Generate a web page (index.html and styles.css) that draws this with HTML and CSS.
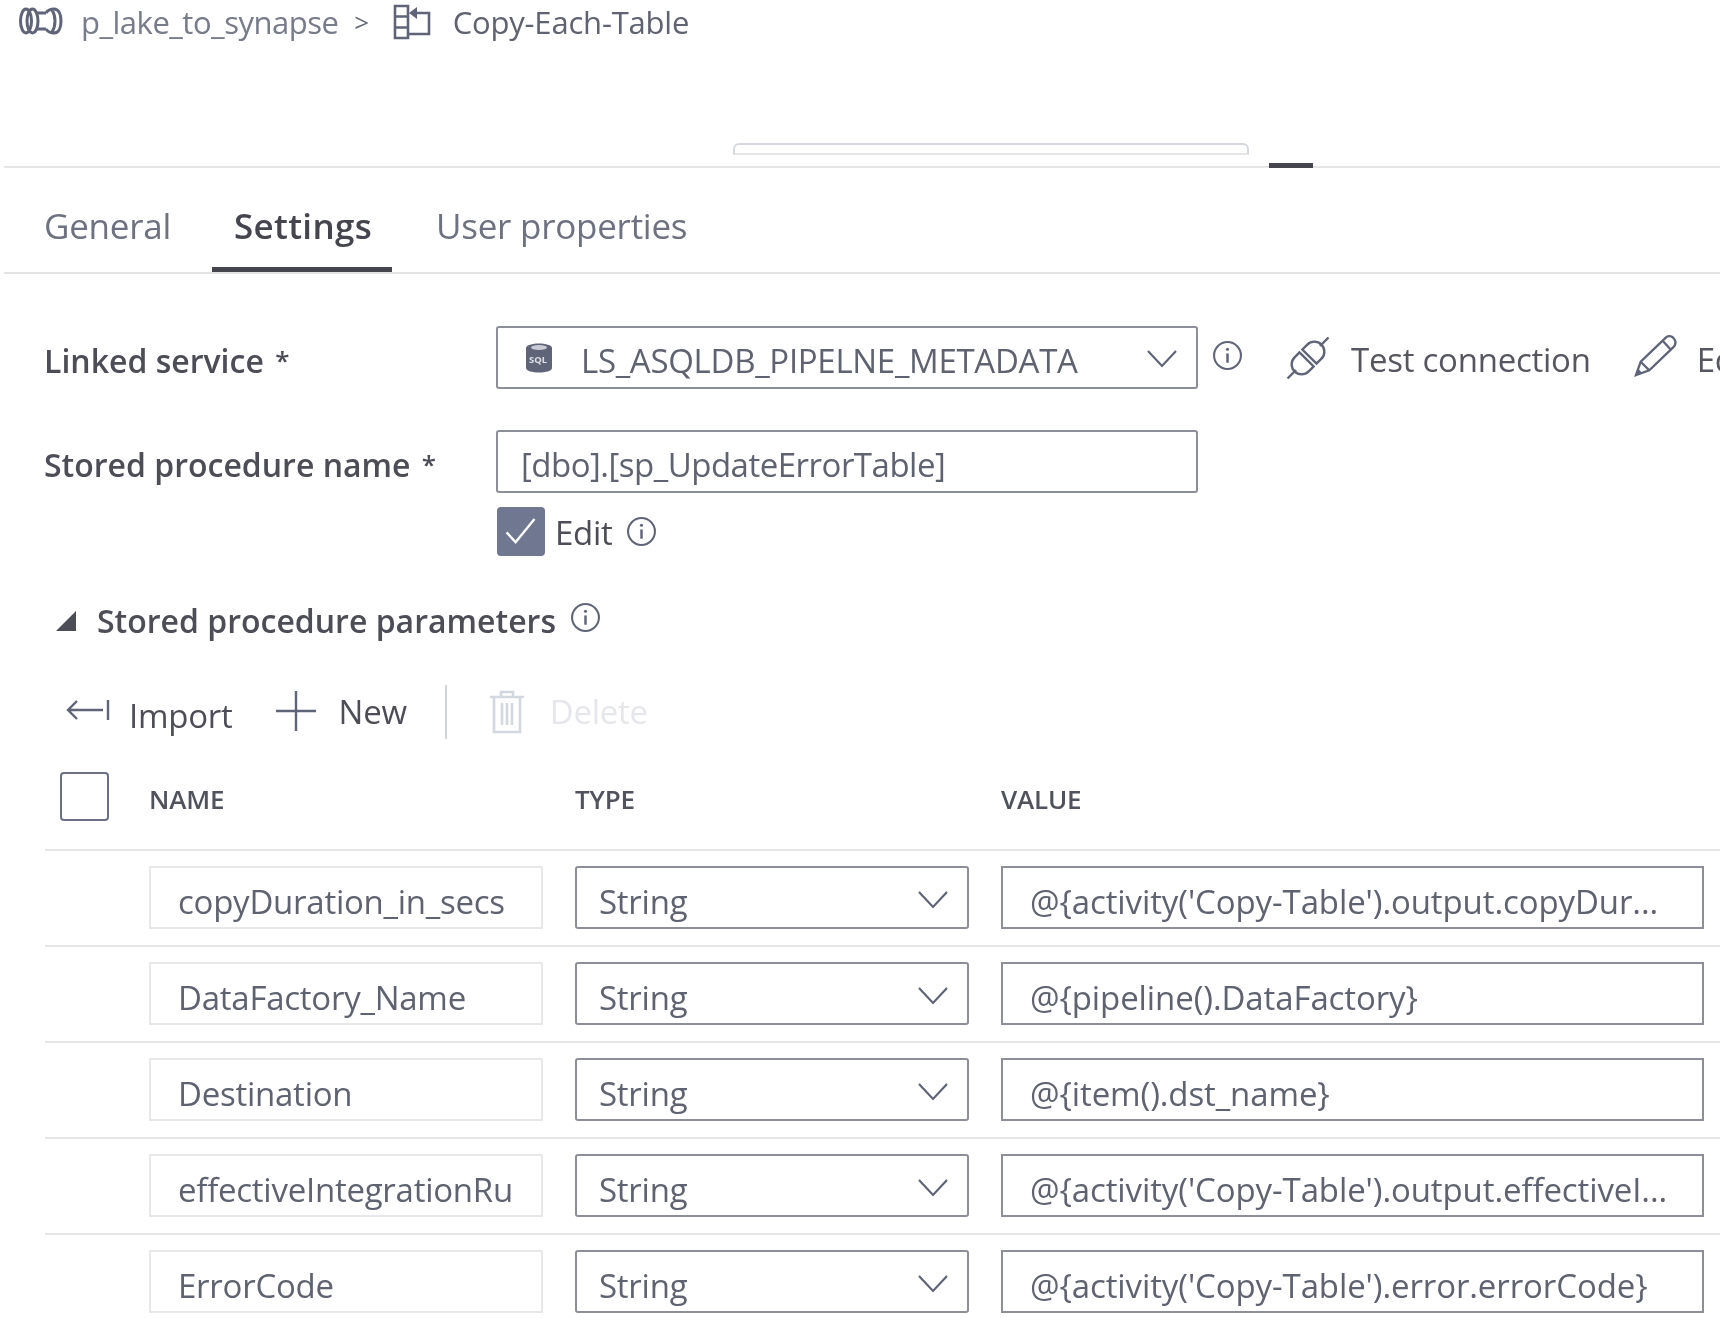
FILE: index.html
```html
<!DOCTYPE html>
<html lang="en">
<head>
  <meta charset="UTF-8">
  <title>Copy-Each-Table</title>
  <link rel="stylesheet" href="styles.css">
</head>
<body>

  <svg class="sprites" width="0" height="0">
    <symbol id="i-info" viewBox="0 0 30 30">
      <circle cx="15" cy="15" r="13" fill="none" stroke="currentColor" stroke-width="2"/>
      <path d="M15 13v9" stroke="currentColor" stroke-width="2.4"/>
      <circle cx="15" cy="9" r="1.5" fill="currentColor"/>
    </symbol>
    <symbol id="i-chevron" viewBox="0 0 30 18">
      <path d="M1 1l14 15L29 1" fill="none" stroke="currentColor" stroke-width="2.2"/>
    </symbol>
  </svg>

  <div class="crumbs">
    <svg class="icon-pipeline" viewBox="0 0 44 28" fill="none" stroke="currentColor" stroke-width="3">
      <ellipse cx="7" cy="14" rx="5.5" ry="12"/>
      <ellipse cx="13.5" cy="14" rx="5.5" ry="12"/>
      <path d="M18 6h9M18 22h9M27 6c2-3 5-4 8-4 5 0 7 6 7 12s-2 12-7 12c-3 0-6-1-8-4M33 3c2 3 3 7 3 11s-1 8-3 11"/>
    </svg>
    <span class="crumb-pipe">p_lake_to_synapse</span>
    <span class="crumb-sep">&gt;</span>
    <svg class="icon-activity" viewBox="0 0 38 36" fill="none" stroke="currentColor" stroke-width="2.6">
      <path d="M2 2h13v32H2zM2 12.5h13M2 23.5h13M15 30h21V9H22"/>
      <path d="M16 9l8-6v12z" fill="currentColor" stroke="none"/>
    </svg>
    <span class="crumb-activity">Copy-Each-Table</span>
  </div>

  <div class="strip">
    <div class="pill"></div>
    <div class="strip-mark"></div>
  </div>

  <div class="tabs">
    <div class="tab">General</div>
    <div class="tab tab-active">Settings</div>
    <div class="tab tab-last">User properties</div>
  </div>

  <div class="form-row first-row">
    <div class="form-label">Linked service <span class="star">*</span></div>
    <div class="field select-field">
      <svg class="icon-sql" viewBox="0 0 26 30">
        <path d="M0 5c0-6 26-6 26 0v20c0 6-26 6-26 0z" fill="#5f6478"/>
        <ellipse cx="13" cy="4.5" rx="8" ry="2.5" fill="#c9ccd6"/>
        <text x="3" y="20" class="sql-text">SQL</text>
      </svg>
      <span class="select-text">LS_ASQLDB_PIPELNE_METADATA</span>
      <svg class="chevron"><use href="#i-chevron"/></svg>
    </div>
    <svg class="info info-service"><use href="#i-info"/></svg>
    <svg class="icon-plug" viewBox="0 0 44 42" fill="none" stroke="currentColor" stroke-width="2.4">
      <g transform="rotate(-45 22 21)">
        <path d="M-7 21H5M39 21h12"/>
        <path d="M20 11h-7a10 10 0 0 0 0 20h7zM24 11h7a10 10 0 0 1 0 20h-7z"/>
      </g>
    </svg>
    <span class="action-text">Test connection</span>
    <svg class="icon-pencil" viewBox="0 0 46 44" fill="none" stroke="currentColor" stroke-width="2.4">
      <path d="M2 42l5-14L33 3c3-3 7-2 9 1s2 6-1 9L16 37zM7 28l9 9M30 6l9 10"/>
      <path d="M2 42l2-7 5 5z" fill="currentColor" stroke="none"/>
    </svg>
    <span class="action-text action-edit">Edit</span>
  </div>

  <div class="form-row second-row">
    <div class="form-label">Stored procedure name <span class="star">*</span></div>
    <div class="field text-field">[dbo].[sp_UpdateErrorTable]</div>
  </div>

  <div class="edit-row">
    <div class="check check-on">
      <svg viewBox="0 0 48 50" fill="none" stroke="#fff" stroke-width="2.6"><path d="M8 26l10 11L39 11"/></svg>
    </div>
    <span class="edit-text">Edit</span>
    <svg class="info"><use href="#i-info"/></svg>
  </div>

  <div class="section-title">
    <svg class="icon-tri" viewBox="0 0 20 20"><path d="M20 0v20H0z" fill="currentColor"/></svg>
    <span class="section-text">Stored procedure parameters</span>
    <svg class="info"><use href="#i-info"/></svg>
  </div>

  <div class="toolbar">
    <svg class="icon-import" viewBox="0 0 44 24" fill="none" stroke="currentColor" stroke-width="2.4">
      <path d="M42 2v20M37 12H2M11 3l-9 9 9 9"/>
    </svg>
    <span class="tool-import">Import</span>
    <svg class="icon-plus" viewBox="0 0 40 40" fill="none" stroke="currentColor" stroke-width="2.4">
      <path d="M20 0v40M0 20h40"/>
    </svg>
    <span class="tool-new">New</span>
    <div class="tool-sep"></div>
    <svg class="icon-trash" viewBox="0 0 34 44" fill="none" stroke="currentColor" stroke-width="2.6">
      <path d="M0 7h34M11 7V2h12v5M4 7v35h26V7M12 13v22M17 13v22M22 13v22"/>
    </svg>
    <span class="tool-delete">Delete</span>
  </div>

  <div class="params">
    <div class="param-grid param-head">
      <div class="check"></div>
      <div class="col-title">NAME</div>
      <div class="col-title">TYPE</div>
      <div class="col-title">VALUE</div>
    </div>

    <div class="param-grid param-row">
      <div></div>
      <div class="field name-field">copyDuration_in_secs</div>
      <div class="field type-field">String<svg class="chevron"><use href="#i-chevron"/></svg></div>
      <div class="field value-field">@{activity('Copy-Table').output.copyDur...</div>
    </div>
    <div class="param-grid param-row">
      <div></div>
      <div class="field name-field">DataFactory_Name</div>
      <div class="field type-field">String<svg class="chevron"><use href="#i-chevron"/></svg></div>
      <div class="field value-field">@{pipeline().DataFactory}</div>
    </div>
    <div class="param-grid param-row">
      <div></div>
      <div class="field name-field">Destination</div>
      <div class="field type-field">String<svg class="chevron"><use href="#i-chevron"/></svg></div>
      <div class="field value-field">@{item().dst_name}</div>
    </div>
    <div class="param-grid param-row">
      <div></div>
      <div class="field name-field">effectiveIntegrationRu</div>
      <div class="field type-field">String<svg class="chevron"><use href="#i-chevron"/></svg></div>
      <div class="field value-field">@{activity('Copy-Table').output.effectiveI...</div>
    </div>
    <div class="param-grid param-row">
      <div></div>
      <div class="field name-field">ErrorCode</div>
      <div class="field type-field">String<svg class="chevron"><use href="#i-chevron"/></svg></div>
      <div class="field value-field">@{activity('Copy-Table').error.errorCode}</div>
    </div>
  </div>

</body>
</html>
```

FILE: styles.css
```css
html, body { margin: 0; height: 1318px; overflow: hidden; background: #fff; }
/* the reference is a soft upscaled capture */
body { font-family: "Open Sans", sans-serif; font-size: 33px; letter-spacing: -0.25px; color: #5f6270; filter: blur(0.4px); }
svg { display: block; flex: none; color: #5f6478; }
.sprites { position: absolute; }

.crumbs { display: flex; align-items: center; height: 44px; padding-left: 19px; margin-bottom: 2px; font-size: 31px; letter-spacing: -0.5px; }
.icon-pipeline { width: 44px; height: 28px; margin-right: 18px; margin-top: -2px; }
.crumb-pipe { color: #777b8a; }
.crumb-sep { margin: 0 24px 0 16px; color: #666a78; font-size: 26px; }
.icon-activity { width: 38px; height: 36px; margin-right: 22px; }
.crumb-activity { color: #5f6270; letter-spacing: -0.2px; }

.strip { position: relative; height: 120px; margin: 0 5px 0 4px; border-bottom: 2px solid #e6e6e6; }
.pill { width: 512px; height: 8px; margin-left: 729px; position: relative; top: 97px; border: 2px solid #d5d8de; border-bottom-color: #e6e6e6; border-radius: 6px 6px 0 0; }
.strip-mark { position: absolute; left: 1265px; top: 117px; width: 44px; height: 5px; background: #45454f; }

.tabs { display: flex; gap: 19px; height: 104px; margin: 0 5px 0 4px; padding-left: 18px; border-bottom: 2px solid #e3e3e3; font-size: 35px; letter-spacing: -0.25px; color: #6d7180; }
.tab { padding: 0 22px; line-height: 116px; height: 104px; box-sizing: border-box; }
.tab-active { padding-right: 20px; font-weight: 600; letter-spacing: 0.3px; color: #45454f; border-bottom: 5px solid #45454f; }
.tab-last { margin-left: 3px; }

.form-row { display: flex; align-items: center; padding-left: 44px; }
.first-row { margin: 52px 5px 0 0; white-space: nowrap; overflow: hidden; }
.second-row { margin-top: 41px; }
.form-label { width: 452px; flex: none; font-size: 32px; letter-spacing: 0; font-weight: 600; color: #4d4d57; position: relative; top: 3px; }
.star { font-size: 26px; font-weight: 600; position: relative; top: -3px; margin-left: 3px; }

.field { display: flex; align-items: center; box-sizing: border-box; border: 2px solid #8d8f98; white-space: nowrap; overflow: hidden; padding-top: 6px; }
.select-field { width: 702px; height: 63px; flex: none; padding-left: 28px; border-radius: 3px; letter-spacing: -0.3px; }
.text-field { width: 702px; height: 63px; flex: none; padding-left: 23px; border-radius: 3px; letter-spacing: -0.5px; }
.icon-sql { width: 26px; height: 30px; margin-top: -6px; }
.sql-text { font-size: 9.5px; font-weight: 700; fill: #dfe1e8; letter-spacing: 0; }
.select-text { margin-left: 29px; }
.chevron { width: 30px; height: 18px; margin-left: auto; margin-right: 19px; margin-top: -4px; }

.info { width: 31px; height: 31px; color: #5f6478; }
.info-service { margin-left: 14px; margin-top: -4px; }
.icon-plug { width: 44px; height: 42px; margin-left: 43px; margin-top: 0; }
.action-text { margin-left: 21px; color: #55565f; position: relative; top: 2px; }
.icon-pencil { width: 44px; height: 42px; margin-left: 43px; margin-top: -3px; }
.action-edit { margin-left: 19px; }

.edit-row { display: flex; align-items: center; margin: 14px 0 0 497px; }
.check { box-sizing: border-box; width: 49px; height: 49px; border: 2px solid #6b7086; border-radius: 4px; }
.check-on { background: #6f7890; border-color: #6f7890; width: 48px; }
.check-on svg { width: 44px; height: 45px; }
.edit-text { margin: 2px 13px 0 10px; color: #4d4d57; }

.section-title { display: flex; align-items: center; height: 30px; margin-top: 47px; padding-left: 56px; font-size: 32px; letter-spacing: 0; font-weight: 600; color: #4d4d57; }
.icon-tri { width: 20px; height: 20px; color: #4d4d57; margin: 6px 21px 0 0; }
.section-text { position: relative; top: 2px; }
.section-title .info { margin: -2px 0 0 14px; }

.toolbar { display: flex; align-items: center; height: 54px; margin-top: 52px; padding-left: 66px; color: #4d4d57; }
.icon-import { width: 44px; height: 24px; margin-top: -4px; }
.tool-import { margin: 7px 43px 0 19px; }
.icon-plus { width: 40px; height: 40px; margin-top: -2px; }
.tool-new { margin: -2px 38px 0 23px; }
.tool-sep { width: 2px; height: 54px; background: #d0d3da; }
.icon-trash { width: 34px; height: 44px; margin-left: 43px; color: #d3d8e0; }
.tool-delete { margin: -2px 0 0 26px; color: #e6e7ea; }

.params { margin: 33px 5px 0 45px; }
.param-grid { display: grid; grid-template-columns: 72px 394px 394px 703px; column-gap: 32px; }
.param-head { height: 77px; padding-left: 15px; grid-template-columns: 57px 394px 394px 703px; }
.col-title { font-size: 26px; font-weight: 600; letter-spacing: -0.2px; color: #50525e; line-height: 54px; }
.param-row { padding: 15px 0 16px; border-top: 2px solid #e6e6e6; }
.param-row:last-child { padding-bottom: 4px; }

.param-row .field { height: 63px; padding-top: 8px; }
.name-field { padding-left: 27px; border-color: #e8e8ea; }
.type-field { padding-left: 22px; border-radius: 3px; }
.value-field { padding-left: 27px; letter-spacing: -0.1px; }
```
